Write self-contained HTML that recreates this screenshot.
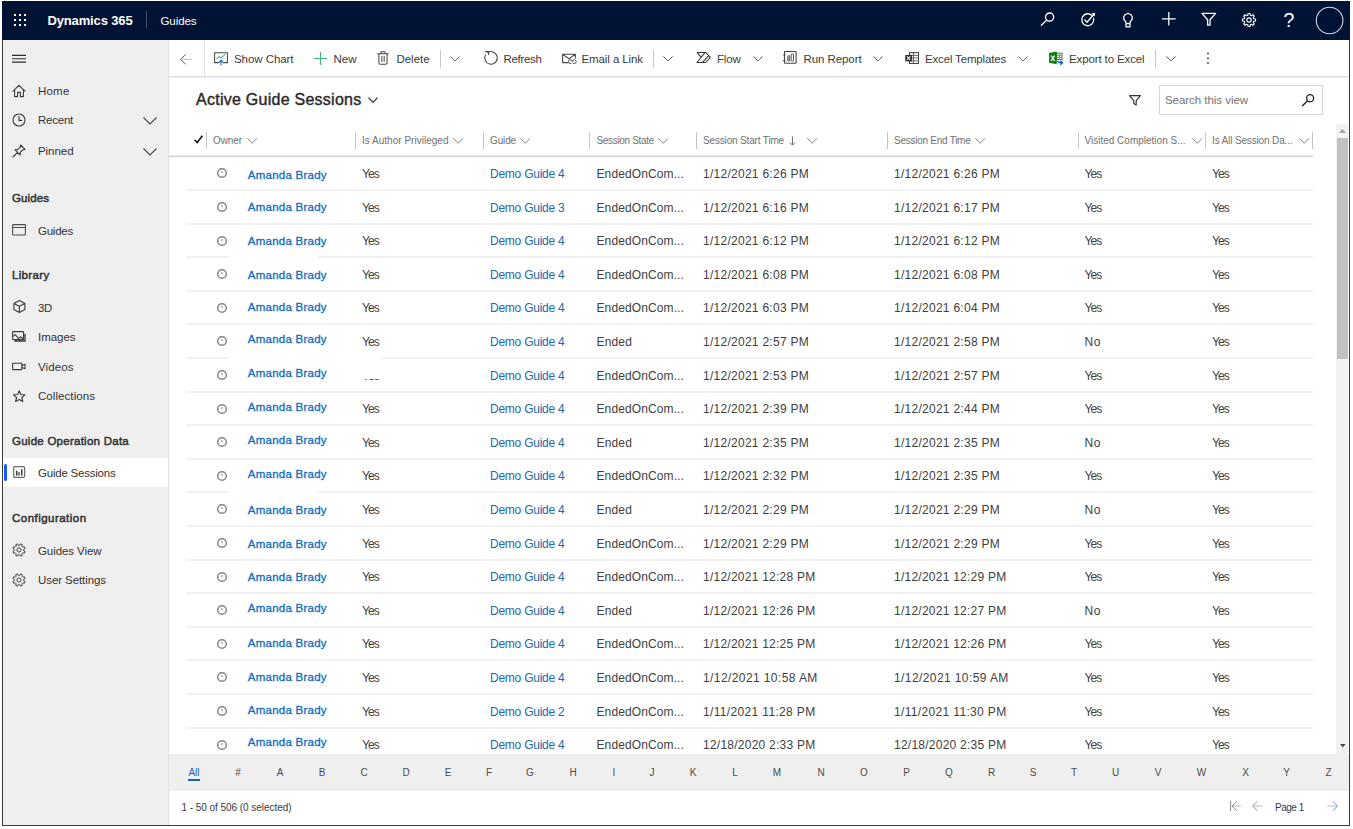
<!DOCTYPE html>
<html lang="en"><head><meta charset="utf-8"><title>Guides - Active Guide Sessions</title>
<style>
html,body{margin:0;padding:0;background:#fff;}
body{position:relative;width:1353px;height:829px;overflow:hidden;font-family:"Liberation Sans",sans-serif;}
.t{position:absolute;white-space:nowrap;line-height:20px;height:20px;}
.r{position:absolute;}
svg{overflow:visible}
</style></head><body>
<div class="chrome">
<div class="r" style="left:2px;top:1px;width:1346px;height:823px;background:transparent;border:1px solid #3b3b3b;"></div>
<div class="r" style="left:2px;top:1px;width:1348px;height:39px;background:#011335;"></div>
<div class="r" style="left:3px;top:40px;width:165px;height:785px;background:#efefef;"></div>
<div class="r" style="left:168px;top:40px;width:1px;height:785px;background:#e2e2e2;"></div>
<div class="r" style="left:3px;top:458px;width:165px;height:29px;background:#ffffff;"></div>
<div class="r" style="left:4px;top:464px;width:3px;height:17px;background:#0f5bff;border-radius:2px;"></div>
<div class="r" style="left:169px;top:76px;width:1180px;height:1px;background:#dedede;"></div>
<div class="r" style="left:169px;top:77px;width:1180px;height:1px;background:#f1f1f1;"></div>
<div class="r" style="left:204px;top:40px;width:1px;height:36px;background:#e4e4e4;"></div>
</div>
<header>
<svg class="r" style="left:14px;top:14px;" width="12" height="12" viewBox="0 0 12 12" fill="none"><rect x="0" y="0" width="2" height="2" fill="#fff"/><rect x="0" y="5" width="2" height="2" fill="#fff"/><rect x="0" y="10" width="2" height="2" fill="#fff"/><rect x="5" y="0" width="2" height="2" fill="#fff"/><rect x="5" y="5" width="2" height="2" fill="#fff"/><rect x="5" y="10" width="2" height="2" fill="#fff"/><rect x="10" y="0" width="2" height="2" fill="#fff"/><rect x="10" y="5" width="2" height="2" fill="#fff"/><rect x="10" y="10" width="2" height="2" fill="#fff"/></svg>
<span class="t" id="t1" style="left:47.5px;top:11px;font-size:13px;color:#fff;letter-spacing:-0.145px;font-weight:700;">Dynamics 365</span>
<div class="r" style="left:146px;top:11px;width:1px;height:17px;background:#46526c;"></div>
<span class="t" id="t2" style="left:160.5px;top:11.3px;font-size:11.5px;color:#fff;letter-spacing:-0.073px;">Guides</span>
<svg class="r" style="left:1040px;top:10.8px;" width="16" height="16" viewBox="0 0 16 16" fill="none"><circle cx="9.6" cy="6.1" r="4.1" stroke="#fff" stroke-width="1.3" fill="none" stroke-linecap="round" stroke-linejoin="round"/><path d="M6.6 9.1 L1.4 14.3" stroke="#fff" stroke-width="1.3" fill="none" stroke-linecap="round" stroke-linejoin="round"/></svg>
<svg class="r" style="left:1080px;top:12px;" width="16" height="16" viewBox="0 0 16 16" fill="none"><path d="M12.6 4.2 A6 6 0 1 0 13.6 6.4" stroke="#fff" stroke-width="1.3" fill="none" stroke-linecap="round" stroke-linejoin="round"/><path d="M4.8 8 L7 10.2 L13.6 2.6" stroke="#fff" stroke-width="1.3" fill="none" stroke-linecap="round" stroke-linejoin="round"/><path d="M11.6 1.2 L15.2 0.8 L14.8 4.4 Z" fill="#fff"/></svg>
<svg class="r" style="left:1120px;top:12.5px;" width="16" height="16" viewBox="0 0 16 16" fill="none"><path d="M6 10.6 v-0.9 q0 -0.8 -0.7 -1.5 a4.3 4.3 0 1 1 5.4 0 q-0.7 0.7 -0.7 1.5 v0.9 M6 10.6 h4 v3.2 h-4 z" stroke="#fff" stroke-width="1.3" fill="none" stroke-linecap="round" stroke-linejoin="round"/></svg>
<svg class="r" style="left:1162px;top:12px;" width="13.6" height="13.6" viewBox="0 0 13.6 13.6" fill="none"><path d="M6.8 0 V13.6 M0 6.8 H13.6" stroke="#fff" stroke-width="1.25" fill="none"/></svg>
<svg class="r" style="left:1201px;top:12px;" width="16" height="16" viewBox="0 0 16 16" fill="none"><path d="M1 1.4 H14.6 L9 7.8 V13.2 H6.6 V7.8 Z" stroke="#fff" stroke-width="1.3" fill="none" stroke-linecap="round" stroke-linejoin="round"/></svg>
<svg class="r" style="left:1241px;top:11.5px;" width="16" height="16" viewBox="0 0 16 16" fill="none"><circle cx="8" cy="8" r="2.2" stroke="#fff" stroke-width="1.2" fill="none"/><path d="M12.75 6.81 L14.52 6.97 L14.52 9.03 L12.75 9.19 L12.20 10.52 L13.34 11.88 L11.88 13.34 L10.52 12.20 L9.19 12.75 L9.03 14.52 L6.97 14.52 L6.81 12.75 L5.48 12.20 L4.12 13.34 L2.66 11.88 L3.80 10.52 L3.25 9.19 L1.48 9.03 L1.48 6.97 L3.25 6.81 L3.80 5.48 L2.66 4.12 L4.12 2.66 L5.48 3.80 L6.81 3.25 L6.97 1.48 L9.03 1.48 L9.19 3.25 L10.52 3.80 L11.88 2.66 L13.34 4.12 L12.20 5.48 Z" stroke="#fff" stroke-width="1.1" fill="none" stroke-linejoin="round"/></svg>
<span class="t" id="t3" style="left:1283.6px;top:10.3px;font-size:19.5px;color:#fff;">?</span>
<svg class="r" style="left:1315px;top:6px;" width="30" height="30" viewBox="0 0 30 30" fill="none"><circle cx="14.6" cy="14.5" r="13.3" stroke="#d3d7e0" stroke-width="1.1" fill="none"/></svg>
</header>
<nav aria-label="Site map">
<svg class="r" style="left:12px;top:54px;" width="14" height="10" viewBox="0 0 14 10" fill="none"><path d="M0 1.3 H14 M0 4.75 H14 M0 8.2 H14" stroke="#2e2e2e" stroke-width="1.2"/></svg>
<span class="t" id="t4" style="left:38px;top:81px;font-size:11.5px;color:#333;letter-spacing:0.203px;">Home</span>
<span class="t" id="t5" style="left:38px;top:109.9px;font-size:11.5px;color:#333;letter-spacing:-0.240px;">Recent</span>
<span class="t" id="t6" style="left:38px;top:140.9px;font-size:11.5px;color:#333;letter-spacing:-0.052px;">Pinned</span>
<span class="t" id="t7" style="left:12px;top:187.5px;font-size:11.5px;color:#333;letter-spacing:0.094px;-webkit-text-stroke:0.5px #333;">Guides</span>
<span class="t" id="t8" style="left:38px;top:220.5px;font-size:11.5px;color:#333;letter-spacing:-0.240px;">Guides</span>
<span class="t" id="t9" style="left:12px;top:264.5px;font-size:11.5px;color:#333;letter-spacing:0.335px;-webkit-text-stroke:0.5px #333;">Library</span>
<span class="t" id="t10" style="left:38px;top:297.5px;font-size:11.5px;color:#333;letter-spacing:-0.352px;">3D</span>
<span class="t" id="t11" style="left:38px;top:327px;font-size:11.5px;color:#333;letter-spacing:-0.036px;">Images</span>
<span class="t" id="t12" style="left:38px;top:356.5px;font-size:11.5px;color:#333;letter-spacing:0.089px;">Videos</span>
<span class="t" id="t13" style="left:38px;top:386px;font-size:11.5px;color:#333;letter-spacing:0.068px;">Collections</span>
<span class="t" id="t14" style="left:12px;top:430.5px;font-size:11.5px;color:#333;letter-spacing:0.256px;-webkit-text-stroke:0.5px #333;">Guide Operation Data</span>
<span class="t" id="t15" style="left:38px;top:463px;font-size:11.5px;color:#333;letter-spacing:-0.218px;">Guide Sessions</span>
<span class="t" id="t16" style="left:12px;top:507.5px;font-size:11.5px;color:#333;letter-spacing:0.469px;-webkit-text-stroke:0.5px #333;">Configuration</span>
<span class="t" id="t17" style="left:38px;top:540.5px;font-size:11.5px;color:#333;letter-spacing:-0.078px;">Guides View</span>
<span class="t" id="t18" style="left:38px;top:570px;font-size:11.5px;color:#333;letter-spacing:-0.079px;">User Settings</span>
<svg class="r" style="left:12px;top:84px;" width="14" height="14" viewBox="0 0 14 14" fill="none"><path d="M1 7.2 L7 1.4 L13 7.2 M2.6 6 V12.6 H5.6 V8.4 H8.4 V12.6 H11.4 V6" stroke="#3a3a3a" stroke-width="1.1" fill="none" stroke-linecap="round" stroke-linejoin="round"/></svg>
<svg class="r" style="left:12px;top:113px;" width="14" height="14" viewBox="0 0 14 14" fill="none"><circle cx="7" cy="7" r="6" stroke="#3a3a3a" stroke-width="1.1" fill="none" stroke-linecap="round" stroke-linejoin="round"/><path d="M7 3.4 V7.4 H9.8" stroke="#3a3a3a" stroke-width="1.1" fill="none" stroke-linecap="round" stroke-linejoin="round"/></svg>
<svg class="r" style="left:12px;top:144px;" width="14" height="14" viewBox="0 0 14 14" fill="none"><path d="M8.6 1 L13 5.4 L10.6 6 L8.4 8.2 L8.2 11 L3 5.8 L5.8 5.6 L8 3.4 Z M5.6 8.4 L1 13" stroke="#3a3a3a" stroke-width="1.1" fill="none" stroke-linecap="round" stroke-linejoin="round"/></svg>
<svg class="r" style="left:143px;top:117px;" width="14" height="8" viewBox="0 0 14 8" fill="none"><path d="M0.5 0.5 L7 7 L13.5 0.5" stroke="#444" stroke-width="1.1" fill="none"/></svg>
<svg class="r" style="left:143px;top:148px;" width="14" height="8" viewBox="0 0 14 8" fill="none"><path d="M0.5 0.5 L7 7 L13.5 0.5" stroke="#444" stroke-width="1.1" fill="none"/></svg>
<svg class="r" style="left:12px;top:224px;" width="14" height="12" viewBox="0 0 14 12" fill="none"><rect x="0.6" y="0.6" width="12.8" height="10.4" rx="0.8" stroke="#4a4a4a" stroke-width="1.1" fill="none"/><path d="M0.6 3.5 H13.4" stroke="#4a4a4a" stroke-width="1"/></svg>
<svg class="r" style="left:12.6px;top:300.4px;" width="13" height="13" viewBox="0 0 13 13" fill="none"><path d="M6.4 0.6 L11.9 3.4 V9.6 L6.4 12.4 L0.9 9.6 V3.4 Z M0.9 3.4 L6.4 6.2 L11.9 3.4 M6.4 6.2 V12.4" stroke="#3a3a3a" stroke-width="1.1" fill="none" stroke-linecap="round" stroke-linejoin="round"/></svg>
<svg class="r" style="left:12px;top:331px;" width="14" height="12" viewBox="0 0 14 12" fill="none"><rect x="0.6" y="0.6" width="11" height="8" rx="0.8" stroke="#3a3a3a" stroke-width="1.1" fill="none" stroke-linecap="round" stroke-linejoin="round"/><path d="M2.4 10 H13 V2.8" stroke="#3a3a3a" stroke-width="1.3" fill="none"/><path d="M0.8 5.4 L3.2 3.6 L6.6 7.6 L8.8 5.8 L11.4 8" stroke="#3a3a3a" stroke-width="1.1" fill="none" stroke-linecap="round" stroke-linejoin="round"/></svg>
<svg class="r" style="left:12px;top:361.5px;" width="14" height="10" viewBox="0 0 14 10" fill="none"><rect x="0.6" y="1.2" width="9.4" height="6.4" rx="0.6" stroke="#3a3a3a" stroke-width="1.1" fill="none" stroke-linecap="round" stroke-linejoin="round"/><path d="M10 3.6 L13 2.2 V6.8 L10 5.4" stroke="#3a3a3a" stroke-width="1.1" fill="none" stroke-linecap="round" stroke-linejoin="round"/></svg>
<svg class="r" style="left:12.8px;top:389.8px;" width="13" height="12" viewBox="0 0 13 12" fill="none"><path d="M6.2 0.7 L7.8 4.5 L12 4.8 L8.8 7.5 L9.8 11.5 L6.2 9.4 L2.6 11.5 L3.6 7.5 L0.4 4.8 L4.6 4.5 Z" stroke="#3a3a3a" stroke-width="1.1" fill="none" stroke-linecap="round" stroke-linejoin="round"/></svg>
<svg class="r" style="left:13px;top:466px;" width="12" height="12" viewBox="0 0 12 12" fill="none"><rect x="0.7" y="0.6" width="10.9" height="10.7" rx="1" stroke="#6e6e6e" stroke-width="1.25" fill="none"/><path d="M3.65 9.6 V4.7 M8.75 9.6 V3.2" stroke="#3a3a3a" stroke-width="1.5"/><path d="M5.9 9.6 V6.1" stroke="#7a7a7a" stroke-width="2"/></svg>
<svg class="r" style="left:12px;top:543px;" width="14" height="14" viewBox="0 0 14 14" fill="none"><circle cx="7" cy="7" r="2.1" stroke="#444" stroke-width="1" fill="none"/><path d="M11.65 7.69 L13.13 8.47 L12.37 10.29 L10.78 9.80 L9.80 10.78 L10.29 12.37 L8.47 13.13 L7.69 11.65 L6.31 11.65 L5.53 13.13 L3.71 12.37 L4.20 10.78 L3.22 9.80 L1.63 10.29 L0.87 8.47 L2.35 7.69 L2.35 6.31 L0.87 5.53 L1.63 3.71 L3.22 4.20 L4.20 3.22 L3.71 1.63 L5.53 0.87 L6.31 2.35 L7.69 2.35 L8.47 0.87 L10.29 1.63 L9.80 3.22 L10.78 4.20 L12.37 3.71 L13.13 5.53 L11.65 6.31 Z" stroke="#444" stroke-width="1" fill="none" stroke-linejoin="round"/></svg>
<svg class="r" style="left:12px;top:573px;" width="14" height="14" viewBox="0 0 14 14" fill="none"><circle cx="7" cy="7" r="2.1" stroke="#444" stroke-width="1" fill="none"/><path d="M11.65 7.69 L13.13 8.47 L12.37 10.29 L10.78 9.80 L9.80 10.78 L10.29 12.37 L8.47 13.13 L7.69 11.65 L6.31 11.65 L5.53 13.13 L3.71 12.37 L4.20 10.78 L3.22 9.80 L1.63 10.29 L0.87 8.47 L2.35 7.69 L2.35 6.31 L0.87 5.53 L1.63 3.71 L3.22 4.20 L4.20 3.22 L3.71 1.63 L5.53 0.87 L6.31 2.35 L7.69 2.35 L8.47 0.87 L10.29 1.63 L9.80 3.22 L10.78 4.20 L12.37 3.71 L13.13 5.53 L11.65 6.31 Z" stroke="#444" stroke-width="1" fill="none" stroke-linejoin="round"/></svg>
</nav>
<div role="toolbar" aria-label="Commands">
<svg class="r" style="left:180.3px;top:53.5px;" width="12" height="11" viewBox="0 0 12 11" fill="none"><path d="M12 5.4 H2" stroke="#c2c2c2" stroke-width="1.1" fill="none"/><path d="M5.6 0.5 L0.7 5.4 L5.6 10.3" stroke="#5a5a5a" stroke-width="1" fill="none"/></svg>
<svg class="r" style="left:214px;top:51px;" width="14" height="15" viewBox="0 0 14 15" fill="none"><path d="M5 11.6 H0.6 V1.7 H13.4 V11.6 H9" stroke="#4a4a4a" stroke-width="1.05" fill="none"/><path d="M2.4 8.2 L5.2 5.4 L7 7 L11.2 3.4" stroke="#4fb48a" stroke-width="1.1" fill="none"/><path d="M7 14.6 V9.6 M4.9 11.4 L7 9.2 L9.1 11.4" stroke="#2a6fd0" stroke-width="1.25" fill="none"/></svg>
<span class="t" id="t19" style="left:234px;top:48.5px;font-size:11.5px;color:#3b3b3b;letter-spacing:-0.059px;">Show Chart</span>
<svg class="r" style="left:314px;top:52px;" width="13" height="13" viewBox="0 0 13 13" fill="none"><path d="M6.5 0 V13 M0 6.5 H13" stroke="#44b87a" stroke-width="1.2"/></svg>
<span class="t" id="t20" style="left:333.5px;top:48.5px;font-size:11.5px;color:#3b3b3b;letter-spacing:-0.005px;">New</span>
<svg class="r" style="left:377px;top:51px;" width="12" height="14" viewBox="0 0 12 14" fill="none"><path d="M0.6 2.7 H11.4 M4 2.5 V0.8 H8 V2.5 M1.9 2.9 V12 Q1.9 13.3 3.2 13.3 H8.8 Q10.1 13.3 10.1 12 V2.9" stroke="#4a4a4a" stroke-width="1.05" fill="none" stroke-linecap="round" stroke-linejoin="round"/><path d="M4.5 5 V11 M6 5 V11 M7.5 5 V11" stroke="#6a6a6a" stroke-width="0.8"/></svg>
<span class="t" id="t21" style="left:396.5px;top:48.5px;font-size:11.5px;color:#3b3b3b;letter-spacing:-0.042px;">Delete</span>
<div class="r" style="left:440px;top:50px;width:1px;height:18px;background:#c8c8c8;"></div>
<svg class="r" style="left:450px;top:56px;" width="10" height="6" viewBox="0 0 10 6" fill="none"><path d="M0.4 0.4 L5 5 L9.6 0.4" stroke="#686868" stroke-width="1" fill="none"/></svg>
<svg class="r" style="left:484px;top:51px;" width="14" height="15" viewBox="0 0 14 15" fill="none"><path d="M3.85 1.44 A6.3 6.3 0 1 1 1.44 3.94 M1.6 0.6 H4.6 V3.6" stroke="#444" stroke-width="1.05" fill="none" stroke-linecap="round" stroke-linejoin="round"/></svg>
<span class="t" id="t22" style="left:503.5px;top:48.5px;font-size:11.5px;color:#3b3b3b;letter-spacing:-0.326px;">Refresh</span>
<svg class="r" style="left:561.5px;top:52px;" width="15" height="14" viewBox="0 0 15 14" fill="none"><path d="M13.4 6.4 V2.2 H0.6 V10.6 H6.2 M0.8 2.4 L7 6.8 L13.2 2.4" stroke="#4a4a4a" stroke-width="1.05" fill="none" stroke-linejoin="round"/><path d="M10.2 9.6 a1.9 1.9 0 1 0 -1.9 1.9 h1.2 M10.4 9.6 a1.9 1.9 0 1 1 1.9 1.9 h-1.2" stroke="#4a4a4a" stroke-width="0.95" fill="none"/></svg>
<span class="t" id="t23" style="left:581.5px;top:48.5px;font-size:11.5px;color:#3b3b3b;letter-spacing:-0.095px;">Email a Link</span>
<div class="r" style="left:652.5px;top:50px;width:1px;height:18px;background:#c8c8c8;"></div>
<svg class="r" style="left:663px;top:56px;" width="10" height="6" viewBox="0 0 10 6" fill="none"><path d="M0.4 0.4 L5 5 L9.6 0.4" stroke="#686868" stroke-width="1" fill="none"/></svg>
<svg class="r" style="left:696px;top:52px;" width="15" height="11" viewBox="0 0 15 11" fill="none"><path d="M0.9 0.4 H9.7 L14.3 5.4 L9.7 10.5 H0.9 L9.1 0.4 M0.9 0.4 L5.4 5.4 M6.6 10.4 L12.6 3.6" stroke="#333" stroke-width="1.05" fill="none" stroke-linejoin="round"/></svg>
<span class="t" id="t24" style="left:717px;top:48.5px;font-size:11.5px;color:#3b3b3b;letter-spacing:-0.195px;">Flow</span>
<svg class="r" style="left:752.5px;top:56px;" width="10" height="6" viewBox="0 0 10 6" fill="none"><path d="M0.4 0.4 L5 5 L9.6 0.4" stroke="#686868" stroke-width="1" fill="none"/></svg>
<svg class="r" style="left:784.4px;top:51.3px;" width="13" height="13" viewBox="0 0 13 13" fill="none"><rect x="0.5" y="0.5" width="11.6" height="11.8" rx="0.8" stroke="#444" stroke-width="1.1" fill="none"/><path d="M-0.8 4 H1.4 M-0.8 9.6 H1.4" stroke="#444" stroke-width="1.2"/><rect x="3.7" y="4.6" width="2" height="5.6" rx="0.8" stroke="#555" stroke-width="0.9" fill="#b0b0b0"/><rect x="7.2" y="2.9" width="2.3" height="7.3" rx="0.8" stroke="#444" stroke-width="0.9" fill="none"/></svg>
<span class="t" id="t25" style="left:803.5px;top:48.5px;font-size:11.5px;color:#3b3b3b;letter-spacing:-0.081px;">Run Report</span>
<svg class="r" style="left:873px;top:56px;" width="10" height="6" viewBox="0 0 10 6" fill="none"><path d="M0.4 0.4 L5 5 L9.6 0.4" stroke="#686868" stroke-width="1" fill="none"/></svg>
<svg class="r" style="left:905px;top:52px;" width="14" height="13" viewBox="0 0 14 13" fill="none"><rect x="4.5" y="0.6" width="9" height="10.9" stroke="#444" stroke-width="1.05" fill="#fff"/><path d="M4.5 3.4 H13.5 M4.5 6 H13.5 M4.5 8.8 H13.5 M8.4 0.6 V11.5" stroke="#555" stroke-width="0.9"/><rect x="0.3" y="3" width="6.6" height="6.4" fill="#2b2b2b"/><path d="M2 4.4 L5.2 8 M5.2 4.4 L2 8" stroke="#fff" stroke-width="1.1"/></svg>
<span class="t" id="t26" style="left:925px;top:48.5px;font-size:11.5px;color:#3b3b3b;letter-spacing:-0.169px;">Excel Templates</span>
<svg class="r" style="left:1017.5px;top:56px;" width="10" height="6" viewBox="0 0 10 6" fill="none"><path d="M0.4 0.4 L5 5 L9.6 0.4" stroke="#686868" stroke-width="1" fill="none"/></svg>
<svg class="r" style="left:1049px;top:51px;" width="15" height="14" viewBox="0 0 15 14" fill="none"><rect x="7.4" y="2.2" width="5.6" height="6.4" stroke="#2e8b2e" stroke-width="1" fill="#fff"/><path d="M7.4 4.4 H13 M7.4 6.5 H13 M10.3 2.2 V8.6" stroke="#55a555" stroke-width="0.9"/><path d="M0.1 2.1 L7.75 0.5 V13.3 L0.1 11.8 Z" fill="#107c10"/><path d="M2.1 4.7 L5.6 10 M5.6 4.7 L2.1 10" stroke="#fff" stroke-width="1.3"/><path d="M8.6 9.8 Q9 11.8 12.6 11.8 M11.2 9.8 L13.6 11.8 L11.2 13.8" stroke="#1a5fc4" stroke-width="1.3" fill="none"/></svg>
<span class="t" id="t27" style="left:1069px;top:48.5px;font-size:11.5px;color:#3b3b3b;letter-spacing:-0.123px;">Export to Excel</span>
<div class="r" style="left:1155px;top:50px;width:1px;height:18px;background:#c8c8c8;"></div>
<svg class="r" style="left:1165.5px;top:56px;" width="10" height="6" viewBox="0 0 10 6" fill="none"><path d="M0.4 0.4 L5 5 L9.6 0.4" stroke="#686868" stroke-width="1" fill="none"/></svg>
<svg class="r" style="left:1206px;top:51px;" width="4" height="14" viewBox="0 0 4 14" fill="none"><circle cx="2" cy="2.4" r="0.95" fill="#4a4a4a"/><circle cx="2" cy="7.2" r="0.95" fill="#4a4a4a"/><circle cx="2" cy="12" r="0.95" fill="#4a4a4a"/></svg>
</div>
<main>
<span class="t" id="t28" style="left:196px;top:90.4px;font-size:16px;color:#2a2a2a;letter-spacing:0.258px;-webkit-text-stroke:0.42px #2a2a2a;">Active Guide Sessions</span>
<svg class="r" style="left:368px;top:97.4px;" width="10" height="7" viewBox="0 0 10 7" fill="none"><path d="M0.5 0.6 L5 5.4 L9.5 0.6" stroke="#333" stroke-width="1.3" fill="none"/></svg>
<svg class="r" style="left:1129px;top:95px;" width="12" height="11" viewBox="0 0 12 11" fill="none"><path d="M0.6 0.6 H11.4 L7.2 5.6 V10 L4.8 8.6 V5.6 Z" stroke="#333" stroke-width="1.15" fill="none" stroke-linejoin="round"/></svg>
<div class="r" style="left:1159px;top:85px;width:162px;height:27.6px;background:#fff;border:1px solid #d6d6d6;"></div>
<span class="t" id="t29" style="left:1165px;top:89.6px;font-size:11.5px;color:#747474;letter-spacing:-0.046px;">Search this view</span>
<svg class="r" style="left:1301px;top:94px;" width="13" height="13" viewBox="0 0 13 13" fill="none"><circle cx="9.1" cy="4.2" r="3.5" stroke="#222" stroke-width="1.3" fill="none"/><path d="M6.6 6.7 L1.2 12" stroke="#222" stroke-width="1.4"/></svg>
<svg class="r" style="left:193.5px;top:135px;" width="9" height="9" viewBox="0 0 9 9" fill="none"><path d="M0.6 4.8 L3.2 7.6 L8.4 0.8" stroke="#111" stroke-width="1.6" fill="none"/></svg>
<div class="r" style="left:206px;top:132px;width:1px;height:17px;background:#c4c4c4;"></div>
<div class="r" style="left:355px;top:132px;width:1px;height:17px;background:#c4c4c4;"></div>
<div class="r" style="left:483px;top:132px;width:1px;height:17px;background:#c4c4c4;"></div>
<div class="r" style="left:589px;top:132px;width:1px;height:17px;background:#c4c4c4;"></div>
<div class="r" style="left:696px;top:132px;width:1px;height:17px;background:#c4c4c4;"></div>
<div class="r" style="left:887px;top:132px;width:1px;height:17px;background:#c4c4c4;"></div>
<div class="r" style="left:1078px;top:132px;width:1px;height:17px;background:#c4c4c4;"></div>
<div class="r" style="left:1205px;top:132px;width:1px;height:17px;background:#c4c4c4;"></div>
<div class="r" style="left:1312px;top:132px;width:1px;height:17px;background:#c4c4c4;"></div>
<span class="t" id="t30" style="left:213px;top:131px;font-size:10px;color:#707070;letter-spacing:-0.091px;">Owner</span>
<svg class="r" style="left:246.5px;top:137.8px;" width="10.4" height="6" viewBox="0 0 10.4 6" fill="none"><path d="M0.3 0.3 L5.2 5.3 L10.1 0.3" stroke="#777" stroke-width="0.9" fill="none"/></svg>
<span class="t" id="t31" style="left:362px;top:131px;font-size:10px;color:#707070;letter-spacing:0.016px;">Is Author Privileged</span>
<svg class="r" style="left:452.5px;top:137.8px;" width="10.4" height="6" viewBox="0 0 10.4 6" fill="none"><path d="M0.3 0.3 L5.2 5.3 L10.1 0.3" stroke="#777" stroke-width="0.9" fill="none"/></svg>
<span class="t" id="t32" style="left:490px;top:131px;font-size:10px;color:#707070;letter-spacing:-0.138px;">Guide</span>
<svg class="r" style="left:520px;top:137.8px;" width="10.4" height="6" viewBox="0 0 10.4 6" fill="none"><path d="M0.3 0.3 L5.2 5.3 L10.1 0.3" stroke="#777" stroke-width="0.9" fill="none"/></svg>
<span class="t" id="t33" style="left:596.5px;top:131px;font-size:10px;color:#707070;letter-spacing:-0.325px;">Session State</span>
<svg class="r" style="left:658px;top:137.8px;" width="10.4" height="6" viewBox="0 0 10.4 6" fill="none"><path d="M0.3 0.3 L5.2 5.3 L10.1 0.3" stroke="#777" stroke-width="0.9" fill="none"/></svg>
<span class="t" id="t34" style="left:703px;top:131px;font-size:10px;color:#707070;letter-spacing:-0.162px;">Session Start Time</span>
<svg class="r" style="left:806.5px;top:137.8px;" width="10.4" height="6" viewBox="0 0 10.4 6" fill="none"><path d="M0.3 0.3 L5.2 5.3 L10.1 0.3" stroke="#777" stroke-width="0.9" fill="none"/></svg>
<svg class="r" style="left:789px;top:136px;" width="7" height="10" viewBox="0 0 7 10" fill="none"><path d="M3.5 0.4 V9 M0.8 6.4 L3.5 9.2 L6.2 6.4" stroke="#666" stroke-width="0.9" fill="none"/></svg>
<span class="t" id="t35" style="left:894px;top:131px;font-size:10px;color:#707070;letter-spacing:-0.257px;">Session End Time</span>
<svg class="r" style="left:974.5px;top:137.8px;" width="10.4" height="6" viewBox="0 0 10.4 6" fill="none"><path d="M0.3 0.3 L5.2 5.3 L10.1 0.3" stroke="#777" stroke-width="0.9" fill="none"/></svg>
<span class="t" id="t36" style="left:1084.5px;top:131px;font-size:10px;color:#707070;letter-spacing:0.001px;">Visited Completion S...</span>
<svg class="r" style="left:1192px;top:137.8px;" width="10.4" height="6" viewBox="0 0 10.4 6" fill="none"><path d="M0.3 0.3 L5.2 5.3 L10.1 0.3" stroke="#777" stroke-width="0.9" fill="none"/></svg>
<span class="t" id="t37" style="left:1212px;top:131px;font-size:10px;color:#707070;letter-spacing:-0.144px;">Is All Session Da...</span>
<svg class="r" style="left:1298.5px;top:137.8px;" width="10.4" height="6" viewBox="0 0 10.4 6" fill="none"><path d="M0.3 0.3 L5.2 5.3 L10.1 0.3" stroke="#777" stroke-width="0.9" fill="none"/></svg>
<svg class="r" style="left:169px;top:155px;" width="1144" height="3" viewBox="0 0 1144 3" fill="none"><rect x="0" y="0.6" width="1144" height="1.3" fill="#cecece"/><rect x="0" y="1.9" width="1144" height="0.6" fill="#ececec"/></svg>
<svg class="r" style="left:217px;top:168.3px;" width="10" height="10" viewBox="0 0 10 10" fill="none"><circle cx="5" cy="5" r="4.3" stroke="#858585" stroke-width="1.5" fill="none"/><path d="M5 3.6 V5.4 M4.2 3.8 H5.8" stroke="#909090" stroke-width="0.8"/></svg>
<span class="t" id="t38" style="left:247.8px;top:165px;font-size:11.5px;color:#0f6cbd;letter-spacing:0.243px;-webkit-text-stroke:0.3px #0f6cbd;">Amanda Brady</span>
<span class="t" id="t39" style="left:362px;top:164px;font-size:12px;color:#404040;letter-spacing:-0.859px;">Yes</span>
<span class="t" id="t40" style="left:490px;top:164px;font-size:12px;color:#2368ab;letter-spacing:-0.240px;">Demo Guide 4</span>
<span class="t" id="t41" style="left:596.5px;top:164px;font-size:12px;color:#404040;letter-spacing:0.112px;">EndedOnCom...</span>
<span class="t" id="t42" style="left:703px;top:164px;font-size:12px;color:#404040;letter-spacing:0.269px;">1/12/2021 6:26 PM</span>
<span class="t" id="t43" style="left:894px;top:164px;font-size:12px;color:#404040;letter-spacing:0.269px;">1/12/2021 6:26 PM</span>
<span class="t" id="t44" style="left:1084.5px;top:164px;font-size:12px;color:#404040;letter-spacing:-0.859px;">Yes</span>
<span class="t" id="t45" style="left:1212px;top:164px;font-size:12px;color:#404040;letter-spacing:-0.859px;">Yes</span>
<svg class="r" style="left:186px;top:189px;" width="1127" height="2" viewBox="0 0 1127 2" fill="none"><rect x="0" y="0.1" width="1127" height="1.8" fill="#f0f0f0"/></svg>
<svg class="r" style="left:217px;top:201.9px;" width="10" height="10" viewBox="0 0 10 10" fill="none"><circle cx="5" cy="5" r="4.3" stroke="#858585" stroke-width="1.5" fill="none"/><path d="M5 3.6 V5.4 M4.2 3.8 H5.8" stroke="#909090" stroke-width="0.8"/></svg>
<span class="t" id="t46" style="left:247.8px;top:196.9px;font-size:11.5px;color:#0f6cbd;letter-spacing:0.243px;-webkit-text-stroke:0.3px #0f6cbd;">Amanda Brady</span>
<span class="t" id="t47" style="left:362px;top:197.6px;font-size:12px;color:#404040;letter-spacing:-0.859px;">Yes</span>
<span class="t" id="t48" style="left:490px;top:197.6px;font-size:12px;color:#2368ab;letter-spacing:-0.240px;">Demo Guide 3</span>
<span class="t" id="t49" style="left:596.5px;top:197.6px;font-size:12px;color:#404040;letter-spacing:0.112px;">EndedOnCom...</span>
<span class="t" id="t50" style="left:703px;top:197.6px;font-size:12px;color:#404040;letter-spacing:0.269px;">1/12/2021 6:16 PM</span>
<span class="t" id="t51" style="left:894px;top:197.6px;font-size:12px;color:#404040;letter-spacing:0.269px;">1/12/2021 6:17 PM</span>
<span class="t" id="t52" style="left:1084.5px;top:197.6px;font-size:12px;color:#404040;letter-spacing:-0.859px;">Yes</span>
<span class="t" id="t53" style="left:1212px;top:197.6px;font-size:12px;color:#404040;letter-spacing:-0.859px;">Yes</span>
<svg class="r" style="left:186px;top:222.6px;" width="1127" height="2" viewBox="0 0 1127 2" fill="none"><rect x="0" y="0.1" width="1127" height="1.8" fill="#f0f0f0"/></svg>
<svg class="r" style="left:217px;top:235.5px;" width="10" height="10" viewBox="0 0 10 10" fill="none"><circle cx="5" cy="5" r="4.3" stroke="#858585" stroke-width="1.5" fill="none"/><path d="M5 3.6 V5.4 M4.2 3.8 H5.8" stroke="#909090" stroke-width="0.8"/></svg>
<span class="t" id="t54" style="left:247.8px;top:231.2px;font-size:11.5px;color:#0f6cbd;letter-spacing:0.243px;-webkit-text-stroke:0.3px #0f6cbd;">Amanda Brady</span>
<span class="t" id="t55" style="left:362px;top:231.2px;font-size:12px;color:#404040;letter-spacing:-0.859px;">Yes</span>
<span class="t" id="t56" style="left:490px;top:231.2px;font-size:12px;color:#2368ab;letter-spacing:-0.240px;">Demo Guide 4</span>
<span class="t" id="t57" style="left:596.5px;top:231.2px;font-size:12px;color:#404040;letter-spacing:0.112px;">EndedOnCom...</span>
<span class="t" id="t58" style="left:703px;top:231.2px;font-size:12px;color:#404040;letter-spacing:0.269px;">1/12/2021 6:12 PM</span>
<span class="t" id="t59" style="left:894px;top:231.2px;font-size:12px;color:#404040;letter-spacing:0.269px;">1/12/2021 6:12 PM</span>
<span class="t" id="t60" style="left:1084.5px;top:231.2px;font-size:12px;color:#404040;letter-spacing:-0.859px;">Yes</span>
<span class="t" id="t61" style="left:1212px;top:231.2px;font-size:12px;color:#404040;letter-spacing:-0.859px;">Yes</span>
<svg class="r" style="left:186px;top:256.2px;" width="1127" height="2" viewBox="0 0 1127 2" fill="none"><rect x="0" y="0.1" width="1127" height="1.8" fill="#f0f0f0"/></svg>
<div class="r" style="left:229px;top:255.2px;width:89px;height:4px;background:#fff;"></div>
<svg class="r" style="left:217px;top:269.1px;" width="10" height="10" viewBox="0 0 10 10" fill="none"><circle cx="5" cy="5" r="4.3" stroke="#858585" stroke-width="1.5" fill="none"/><path d="M5 3.6 V5.4 M4.2 3.8 H5.8" stroke="#909090" stroke-width="0.8"/></svg>
<span class="t" id="t62" style="left:247.8px;top:264.8px;font-size:11.5px;color:#0f6cbd;letter-spacing:0.243px;-webkit-text-stroke:0.3px #0f6cbd;">Amanda Brady</span>
<span class="t" id="t63" style="left:362px;top:264.8px;font-size:12px;color:#404040;letter-spacing:-0.859px;">Yes</span>
<span class="t" id="t64" style="left:490px;top:264.8px;font-size:12px;color:#2368ab;letter-spacing:-0.240px;">Demo Guide 4</span>
<span class="t" id="t65" style="left:596.5px;top:264.8px;font-size:12px;color:#404040;letter-spacing:0.112px;">EndedOnCom...</span>
<span class="t" id="t66" style="left:703px;top:264.8px;font-size:12px;color:#404040;letter-spacing:0.269px;">1/12/2021 6:08 PM</span>
<span class="t" id="t67" style="left:894px;top:264.8px;font-size:12px;color:#404040;letter-spacing:0.269px;">1/12/2021 6:08 PM</span>
<span class="t" id="t68" style="left:1084.5px;top:264.8px;font-size:12px;color:#404040;letter-spacing:-0.859px;">Yes</span>
<span class="t" id="t69" style="left:1212px;top:264.8px;font-size:12px;color:#404040;letter-spacing:-0.859px;">Yes</span>
<svg class="r" style="left:186px;top:289.8px;" width="1127" height="2" viewBox="0 0 1127 2" fill="none"><rect x="0" y="0.1" width="1127" height="1.8" fill="#f0f0f0"/></svg>
<svg class="r" style="left:217px;top:302.7px;" width="10" height="10" viewBox="0 0 10 10" fill="none"><circle cx="5" cy="5" r="4.3" stroke="#858585" stroke-width="1.5" fill="none"/><path d="M5 3.6 V5.4 M4.2 3.8 H5.8" stroke="#909090" stroke-width="0.8"/></svg>
<span class="t" id="t70" style="left:247.8px;top:296.9px;font-size:11.5px;color:#0f6cbd;letter-spacing:0.243px;-webkit-text-stroke:0.3px #0f6cbd;">Amanda Brady</span>
<span class="t" id="t71" style="left:362px;top:298.4px;font-size:12px;color:#404040;letter-spacing:-0.859px;">Yes</span>
<span class="t" id="t72" style="left:490px;top:298.4px;font-size:12px;color:#2368ab;letter-spacing:-0.240px;">Demo Guide 4</span>
<span class="t" id="t73" style="left:596.5px;top:298.4px;font-size:12px;color:#404040;letter-spacing:0.112px;">EndedOnCom...</span>
<span class="t" id="t74" style="left:703px;top:298.4px;font-size:12px;color:#404040;letter-spacing:0.269px;">1/12/2021 6:03 PM</span>
<span class="t" id="t75" style="left:894px;top:298.4px;font-size:12px;color:#404040;letter-spacing:0.269px;">1/12/2021 6:04 PM</span>
<span class="t" id="t76" style="left:1084.5px;top:298.4px;font-size:12px;color:#404040;letter-spacing:-0.859px;">Yes</span>
<span class="t" id="t77" style="left:1212px;top:298.4px;font-size:12px;color:#404040;letter-spacing:-0.859px;">Yes</span>
<svg class="r" style="left:186px;top:323.4px;" width="1127" height="2" viewBox="0 0 1127 2" fill="none"><rect x="0" y="0.1" width="1127" height="1.8" fill="#f0f0f0"/></svg>
<svg class="r" style="left:217px;top:336.3px;" width="10" height="10" viewBox="0 0 10 10" fill="none"><circle cx="5" cy="5" r="4.3" stroke="#858585" stroke-width="1.5" fill="none"/><path d="M5 3.6 V5.4 M4.2 3.8 H5.8" stroke="#909090" stroke-width="0.8"/></svg>
<span class="t" id="t78" style="left:247.8px;top:328.8px;font-size:11.5px;color:#0f6cbd;letter-spacing:0.243px;-webkit-text-stroke:0.3px #0f6cbd;">Amanda Brady</span>
<span class="t" id="t79" style="left:362px;top:332px;font-size:12px;color:#404040;letter-spacing:-0.859px;">Yes</span>
<span class="t" id="t80" style="left:490px;top:332px;font-size:12px;color:#2368ab;letter-spacing:-0.240px;">Demo Guide 4</span>
<span class="t" id="t81" style="left:596.5px;top:332px;font-size:12px;color:#404040;letter-spacing:0.159px;">Ended</span>
<span class="t" id="t82" style="left:703px;top:332px;font-size:12px;color:#404040;letter-spacing:0.269px;">1/12/2021 2:57 PM</span>
<span class="t" id="t83" style="left:894px;top:332px;font-size:12px;color:#404040;letter-spacing:0.269px;">1/12/2021 2:58 PM</span>
<span class="t" id="t84" style="left:1084.5px;top:332px;font-size:12px;color:#404040;letter-spacing:0.578px;">No</span>
<span class="t" id="t85" style="left:1212px;top:332px;font-size:12px;color:#404040;letter-spacing:-0.859px;">Yes</span>
<svg class="r" style="left:186px;top:357px;" width="1127" height="2" viewBox="0 0 1127 2" fill="none"><rect x="0" y="0.1" width="1127" height="1.8" fill="#f0f0f0"/></svg>
<div class="r" style="left:229px;top:356px;width:153px;height:4px;background:#fff;"></div>
<svg class="r" style="left:217px;top:369.9px;" width="10" height="10" viewBox="0 0 10 10" fill="none"><circle cx="5" cy="5" r="4.3" stroke="#858585" stroke-width="1.5" fill="none"/><path d="M5 3.6 V5.4 M4.2 3.8 H5.8" stroke="#909090" stroke-width="0.8"/></svg>
<span class="t" id="t86" style="left:247.8px;top:362.85px;font-size:11.5px;color:#0f6cbd;letter-spacing:0.243px;-webkit-text-stroke:0.3px #0f6cbd;">Amanda Brady</span>
<span class="t" id="t87" style="left:362px;top:365.6px;font-size:12px;color:#404040;letter-spacing:-0.859px;">Yes</span>
<span class="t" id="t88" style="left:490px;top:365.6px;font-size:12px;color:#2368ab;letter-spacing:-0.240px;">Demo Guide 4</span>
<span class="t" id="t89" style="left:596.5px;top:365.6px;font-size:12px;color:#404040;letter-spacing:0.112px;">EndedOnCom...</span>
<span class="t" id="t90" style="left:703px;top:365.6px;font-size:12px;color:#404040;letter-spacing:0.269px;">1/12/2021 2:53 PM</span>
<span class="t" id="t91" style="left:894px;top:365.6px;font-size:12px;color:#404040;letter-spacing:0.269px;">1/12/2021 2:57 PM</span>
<span class="t" id="t92" style="left:1084.5px;top:365.6px;font-size:12px;color:#404040;letter-spacing:-0.859px;">Yes</span>
<span class="t" id="t93" style="left:1212px;top:365.6px;font-size:12px;color:#404040;letter-spacing:-0.859px;">Yes</span>
<div class="r" style="left:359px;top:365.6px;width:26px;height:13.4px;background:#fff;"></div>
<svg class="r" style="left:186px;top:390.6px;" width="1127" height="2" viewBox="0 0 1127 2" fill="none"><rect x="0" y="0.1" width="1127" height="1.8" fill="#f0f0f0"/></svg>
<svg class="r" style="left:217px;top:403.5px;" width="10" height="10" viewBox="0 0 10 10" fill="none"><circle cx="5" cy="5" r="4.3" stroke="#858585" stroke-width="1.5" fill="none"/><path d="M5 3.6 V5.4 M4.2 3.8 H5.8" stroke="#909090" stroke-width="0.8"/></svg>
<span class="t" id="t94" style="left:247.8px;top:396.7px;font-size:11.5px;color:#0f6cbd;letter-spacing:0.243px;-webkit-text-stroke:0.3px #0f6cbd;">Amanda Brady</span>
<span class="t" id="t95" style="left:362px;top:399.2px;font-size:12px;color:#404040;letter-spacing:-0.859px;">Yes</span>
<span class="t" id="t96" style="left:490px;top:399.2px;font-size:12px;color:#2368ab;letter-spacing:-0.240px;">Demo Guide 4</span>
<span class="t" id="t97" style="left:596.5px;top:399.2px;font-size:12px;color:#404040;letter-spacing:0.112px;">EndedOnCom...</span>
<span class="t" id="t98" style="left:703px;top:399.2px;font-size:12px;color:#404040;letter-spacing:0.269px;">1/12/2021 2:39 PM</span>
<span class="t" id="t99" style="left:894px;top:399.2px;font-size:12px;color:#404040;letter-spacing:0.269px;">1/12/2021 2:44 PM</span>
<span class="t" id="t100" style="left:1084.5px;top:399.2px;font-size:12px;color:#404040;letter-spacing:-0.859px;">Yes</span>
<span class="t" id="t101" style="left:1212px;top:399.2px;font-size:12px;color:#404040;letter-spacing:-0.859px;">Yes</span>
<svg class="r" style="left:186px;top:424.2px;" width="1127" height="2" viewBox="0 0 1127 2" fill="none"><rect x="0" y="0.1" width="1127" height="1.8" fill="#f0f0f0"/></svg>
<svg class="r" style="left:217px;top:437.1px;" width="10" height="10" viewBox="0 0 10 10" fill="none"><circle cx="5" cy="5" r="4.3" stroke="#858585" stroke-width="1.5" fill="none"/><path d="M5 3.6 V5.4 M4.2 3.8 H5.8" stroke="#909090" stroke-width="0.8"/></svg>
<span class="t" id="t102" style="left:247.8px;top:430.05px;font-size:11.5px;color:#0f6cbd;letter-spacing:0.243px;-webkit-text-stroke:0.3px #0f6cbd;">Amanda Brady</span>
<span class="t" id="t103" style="left:362px;top:432.8px;font-size:12px;color:#404040;letter-spacing:-0.859px;">Yes</span>
<span class="t" id="t104" style="left:490px;top:432.8px;font-size:12px;color:#2368ab;letter-spacing:-0.240px;">Demo Guide 4</span>
<span class="t" id="t105" style="left:596.5px;top:432.8px;font-size:12px;color:#404040;letter-spacing:0.159px;">Ended</span>
<span class="t" id="t106" style="left:703px;top:432.8px;font-size:12px;color:#404040;letter-spacing:0.269px;">1/12/2021 2:35 PM</span>
<span class="t" id="t107" style="left:894px;top:432.8px;font-size:12px;color:#404040;letter-spacing:0.269px;">1/12/2021 2:35 PM</span>
<span class="t" id="t108" style="left:1084.5px;top:432.8px;font-size:12px;color:#404040;letter-spacing:0.578px;">No</span>
<span class="t" id="t109" style="left:1212px;top:432.8px;font-size:12px;color:#404040;letter-spacing:-0.859px;">Yes</span>
<svg class="r" style="left:186px;top:457.8px;" width="1127" height="2" viewBox="0 0 1127 2" fill="none"><rect x="0" y="0.1" width="1127" height="1.8" fill="#f0f0f0"/></svg>
<svg class="r" style="left:217px;top:470.7px;" width="10" height="10" viewBox="0 0 10 10" fill="none"><circle cx="5" cy="5" r="4.3" stroke="#858585" stroke-width="1.5" fill="none"/><path d="M5 3.6 V5.4 M4.2 3.8 H5.8" stroke="#909090" stroke-width="0.8"/></svg>
<span class="t" id="t110" style="left:247.8px;top:464.15px;font-size:11.5px;color:#0f6cbd;letter-spacing:0.243px;-webkit-text-stroke:0.3px #0f6cbd;">Amanda Brady</span>
<span class="t" id="t111" style="left:362px;top:466.4px;font-size:12px;color:#404040;letter-spacing:-0.859px;">Yes</span>
<span class="t" id="t112" style="left:490px;top:466.4px;font-size:12px;color:#2368ab;letter-spacing:-0.240px;">Demo Guide 4</span>
<span class="t" id="t113" style="left:596.5px;top:466.4px;font-size:12px;color:#404040;letter-spacing:0.112px;">EndedOnCom...</span>
<span class="t" id="t114" style="left:703px;top:466.4px;font-size:12px;color:#404040;letter-spacing:0.269px;">1/12/2021 2:32 PM</span>
<span class="t" id="t115" style="left:894px;top:466.4px;font-size:12px;color:#404040;letter-spacing:0.269px;">1/12/2021 2:35 PM</span>
<span class="t" id="t116" style="left:1084.5px;top:466.4px;font-size:12px;color:#404040;letter-spacing:-0.859px;">Yes</span>
<span class="t" id="t117" style="left:1212px;top:466.4px;font-size:12px;color:#404040;letter-spacing:-0.859px;">Yes</span>
<svg class="r" style="left:186px;top:491.4px;" width="1127" height="2" viewBox="0 0 1127 2" fill="none"><rect x="0" y="0.1" width="1127" height="1.8" fill="#f0f0f0"/></svg>
<div class="r" style="left:229px;top:490.4px;width:89px;height:4px;background:#fff;"></div>
<svg class="r" style="left:217px;top:504.3px;" width="10" height="10" viewBox="0 0 10 10" fill="none"><circle cx="5" cy="5" r="4.3" stroke="#858585" stroke-width="1.5" fill="none"/><path d="M5 3.6 V5.4 M4.2 3.8 H5.8" stroke="#909090" stroke-width="0.8"/></svg>
<span class="t" id="t118" style="left:247.8px;top:500px;font-size:11.5px;color:#0f6cbd;letter-spacing:0.243px;-webkit-text-stroke:0.3px #0f6cbd;">Amanda Brady</span>
<span class="t" id="t119" style="left:362px;top:500px;font-size:12px;color:#404040;letter-spacing:-0.859px;">Yes</span>
<span class="t" id="t120" style="left:490px;top:500px;font-size:12px;color:#2368ab;letter-spacing:-0.240px;">Demo Guide 4</span>
<span class="t" id="t121" style="left:596.5px;top:500px;font-size:12px;color:#404040;letter-spacing:0.159px;">Ended</span>
<span class="t" id="t122" style="left:703px;top:500px;font-size:12px;color:#404040;letter-spacing:0.269px;">1/12/2021 2:29 PM</span>
<span class="t" id="t123" style="left:894px;top:500px;font-size:12px;color:#404040;letter-spacing:0.269px;">1/12/2021 2:29 PM</span>
<span class="t" id="t124" style="left:1084.5px;top:500px;font-size:12px;color:#404040;letter-spacing:0.578px;">No</span>
<span class="t" id="t125" style="left:1212px;top:500px;font-size:12px;color:#404040;letter-spacing:-0.859px;">Yes</span>
<svg class="r" style="left:186px;top:525px;" width="1127" height="2" viewBox="0 0 1127 2" fill="none"><rect x="0" y="0.1" width="1127" height="1.8" fill="#f0f0f0"/></svg>
<svg class="r" style="left:217px;top:537.9px;" width="10" height="10" viewBox="0 0 10 10" fill="none"><circle cx="5" cy="5" r="4.3" stroke="#858585" stroke-width="1.5" fill="none"/><path d="M5 3.6 V5.4 M4.2 3.8 H5.8" stroke="#909090" stroke-width="0.8"/></svg>
<span class="t" id="t126" style="left:247.8px;top:534.1px;font-size:11.5px;color:#0f6cbd;letter-spacing:0.243px;-webkit-text-stroke:0.3px #0f6cbd;">Amanda Brady</span>
<span class="t" id="t127" style="left:362px;top:533.6px;font-size:12px;color:#404040;letter-spacing:-0.859px;">Yes</span>
<span class="t" id="t128" style="left:490px;top:533.6px;font-size:12px;color:#2368ab;letter-spacing:-0.240px;">Demo Guide 4</span>
<span class="t" id="t129" style="left:596.5px;top:533.6px;font-size:12px;color:#404040;letter-spacing:0.112px;">EndedOnCom...</span>
<span class="t" id="t130" style="left:703px;top:533.6px;font-size:12px;color:#404040;letter-spacing:0.269px;">1/12/2021 2:29 PM</span>
<span class="t" id="t131" style="left:894px;top:533.6px;font-size:12px;color:#404040;letter-spacing:0.269px;">1/12/2021 2:29 PM</span>
<span class="t" id="t132" style="left:1084.5px;top:533.6px;font-size:12px;color:#404040;letter-spacing:-0.859px;">Yes</span>
<span class="t" id="t133" style="left:1212px;top:533.6px;font-size:12px;color:#404040;letter-spacing:-0.859px;">Yes</span>
<svg class="r" style="left:186px;top:558.6px;" width="1127" height="2" viewBox="0 0 1127 2" fill="none"><rect x="0" y="0.1" width="1127" height="1.8" fill="#f0f0f0"/></svg>
<svg class="r" style="left:217px;top:571.5px;" width="10" height="10" viewBox="0 0 10 10" fill="none"><circle cx="5" cy="5" r="4.3" stroke="#858585" stroke-width="1.5" fill="none"/><path d="M5 3.6 V5.4 M4.2 3.8 H5.8" stroke="#909090" stroke-width="0.8"/></svg>
<span class="t" id="t134" style="left:247.8px;top:567.2px;font-size:11.5px;color:#0f6cbd;letter-spacing:0.243px;-webkit-text-stroke:0.3px #0f6cbd;">Amanda Brady</span>
<span class="t" id="t135" style="left:362px;top:567.2px;font-size:12px;color:#404040;letter-spacing:-0.859px;">Yes</span>
<span class="t" id="t136" style="left:490px;top:567.2px;font-size:12px;color:#2368ab;letter-spacing:-0.240px;">Demo Guide 4</span>
<span class="t" id="t137" style="left:596.5px;top:567.2px;font-size:12px;color:#404040;letter-spacing:0.112px;">EndedOnCom...</span>
<span class="t" id="t138" style="left:703px;top:567.2px;font-size:12px;color:#404040;letter-spacing:0.245px;">1/12/2021 12:28 PM</span>
<span class="t" id="t139" style="left:894px;top:567.2px;font-size:12px;color:#404040;letter-spacing:0.245px;">1/12/2021 12:29 PM</span>
<span class="t" id="t140" style="left:1084.5px;top:567.2px;font-size:12px;color:#404040;letter-spacing:-0.859px;">Yes</span>
<span class="t" id="t141" style="left:1212px;top:567.2px;font-size:12px;color:#404040;letter-spacing:-0.859px;">Yes</span>
<svg class="r" style="left:186px;top:592.2px;" width="1127" height="2" viewBox="0 0 1127 2" fill="none"><rect x="0" y="0.1" width="1127" height="1.8" fill="#f0f0f0"/></svg>
<svg class="r" style="left:217px;top:605.1px;" width="10" height="10" viewBox="0 0 10 10" fill="none"><circle cx="5" cy="5" r="4.3" stroke="#858585" stroke-width="1.5" fill="none"/><path d="M5 3.6 V5.4 M4.2 3.8 H5.8" stroke="#909090" stroke-width="0.8"/></svg>
<span class="t" id="t142" style="left:247.8px;top:598.3px;font-size:11.5px;color:#0f6cbd;letter-spacing:0.243px;-webkit-text-stroke:0.3px #0f6cbd;">Amanda Brady</span>
<span class="t" id="t143" style="left:362px;top:600.8px;font-size:12px;color:#404040;letter-spacing:-0.859px;">Yes</span>
<span class="t" id="t144" style="left:490px;top:600.8px;font-size:12px;color:#2368ab;letter-spacing:-0.240px;">Demo Guide 4</span>
<span class="t" id="t145" style="left:596.5px;top:600.8px;font-size:12px;color:#404040;letter-spacing:0.159px;">Ended</span>
<span class="t" id="t146" style="left:703px;top:600.8px;font-size:12px;color:#404040;letter-spacing:0.245px;">1/12/2021 12:26 PM</span>
<span class="t" id="t147" style="left:894px;top:600.8px;font-size:12px;color:#404040;letter-spacing:0.245px;">1/12/2021 12:27 PM</span>
<span class="t" id="t148" style="left:1084.5px;top:600.8px;font-size:12px;color:#404040;letter-spacing:0.578px;">No</span>
<span class="t" id="t149" style="left:1212px;top:600.8px;font-size:12px;color:#404040;letter-spacing:-0.859px;">Yes</span>
<svg class="r" style="left:186px;top:625.8px;" width="1127" height="2" viewBox="0 0 1127 2" fill="none"><rect x="0" y="0.1" width="1127" height="1.8" fill="#f0f0f0"/></svg>
<svg class="r" style="left:217px;top:638.7px;" width="10" height="10" viewBox="0 0 10 10" fill="none"><circle cx="5" cy="5" r="4.3" stroke="#858585" stroke-width="1.5" fill="none"/><path d="M5 3.6 V5.4 M4.2 3.8 H5.8" stroke="#909090" stroke-width="0.8"/></svg>
<span class="t" id="t150" style="left:247.8px;top:633.4px;font-size:11.5px;color:#0f6cbd;letter-spacing:0.243px;-webkit-text-stroke:0.3px #0f6cbd;">Amanda Brady</span>
<span class="t" id="t151" style="left:362px;top:634.4px;font-size:12px;color:#404040;letter-spacing:-0.859px;">Yes</span>
<span class="t" id="t152" style="left:490px;top:634.4px;font-size:12px;color:#2368ab;letter-spacing:-0.240px;">Demo Guide 4</span>
<span class="t" id="t153" style="left:596.5px;top:634.4px;font-size:12px;color:#404040;letter-spacing:0.112px;">EndedOnCom...</span>
<span class="t" id="t154" style="left:703px;top:634.4px;font-size:12px;color:#404040;letter-spacing:0.245px;">1/12/2021 12:25 PM</span>
<span class="t" id="t155" style="left:894px;top:634.4px;font-size:12px;color:#404040;letter-spacing:0.245px;">1/12/2021 12:26 PM</span>
<span class="t" id="t156" style="left:1084.5px;top:634.4px;font-size:12px;color:#404040;letter-spacing:-0.859px;">Yes</span>
<span class="t" id="t157" style="left:1212px;top:634.4px;font-size:12px;color:#404040;letter-spacing:-0.859px;">Yes</span>
<svg class="r" style="left:186px;top:659.4px;" width="1127" height="2" viewBox="0 0 1127 2" fill="none"><rect x="0" y="0.1" width="1127" height="1.8" fill="#f0f0f0"/></svg>
<svg class="r" style="left:217px;top:672.3px;" width="10" height="10" viewBox="0 0 10 10" fill="none"><circle cx="5" cy="5" r="4.3" stroke="#858585" stroke-width="1.5" fill="none"/><path d="M5 3.6 V5.4 M4.2 3.8 H5.8" stroke="#909090" stroke-width="0.8"/></svg>
<span class="t" id="t158" style="left:247.8px;top:667.25px;font-size:11.5px;color:#0f6cbd;letter-spacing:0.243px;-webkit-text-stroke:0.3px #0f6cbd;">Amanda Brady</span>
<span class="t" id="t159" style="left:362px;top:668px;font-size:12px;color:#404040;letter-spacing:-0.859px;">Yes</span>
<span class="t" id="t160" style="left:490px;top:668px;font-size:12px;color:#2368ab;letter-spacing:-0.240px;">Demo Guide 4</span>
<span class="t" id="t161" style="left:596.5px;top:668px;font-size:12px;color:#404040;letter-spacing:0.112px;">EndedOnCom...</span>
<span class="t" id="t162" style="left:703px;top:668px;font-size:12px;color:#404040;letter-spacing:0.407px;">1/12/2021 10:58 AM</span>
<span class="t" id="t163" style="left:894px;top:668px;font-size:12px;color:#404040;letter-spacing:0.407px;">1/12/2021 10:59 AM</span>
<span class="t" id="t164" style="left:1084.5px;top:668px;font-size:12px;color:#404040;letter-spacing:-0.859px;">Yes</span>
<span class="t" id="t165" style="left:1212px;top:668px;font-size:12px;color:#404040;letter-spacing:-0.859px;">Yes</span>
<svg class="r" style="left:186px;top:693px;" width="1127" height="2" viewBox="0 0 1127 2" fill="none"><rect x="0" y="0.1" width="1127" height="1.8" fill="#f0f0f0"/></svg>
<svg class="r" style="left:217px;top:705.9px;" width="10" height="10" viewBox="0 0 10 10" fill="none"><circle cx="5" cy="5" r="4.3" stroke="#858585" stroke-width="1.5" fill="none"/><path d="M5 3.6 V5.4 M4.2 3.8 H5.8" stroke="#909090" stroke-width="0.8"/></svg>
<span class="t" id="t166" style="left:247.8px;top:700.35px;font-size:11.5px;color:#0f6cbd;letter-spacing:0.243px;-webkit-text-stroke:0.3px #0f6cbd;">Amanda Brady</span>
<span class="t" id="t167" style="left:362px;top:701.6px;font-size:12px;color:#404040;letter-spacing:-0.859px;">Yes</span>
<span class="t" id="t168" style="left:490px;top:701.6px;font-size:12px;color:#2368ab;letter-spacing:-0.240px;">Demo Guide 2</span>
<span class="t" id="t169" style="left:596.5px;top:701.6px;font-size:12px;color:#404040;letter-spacing:0.112px;">EndedOnCom...</span>
<span class="t" id="t170" style="left:703px;top:701.6px;font-size:12px;color:#404040;letter-spacing:0.344px;">1/11/2021 11:28 PM</span>
<span class="t" id="t171" style="left:894px;top:701.6px;font-size:12px;color:#404040;letter-spacing:0.344px;">1/11/2021 11:30 PM</span>
<span class="t" id="t172" style="left:1084.5px;top:701.6px;font-size:12px;color:#404040;letter-spacing:-0.859px;">Yes</span>
<span class="t" id="t173" style="left:1212px;top:701.6px;font-size:12px;color:#404040;letter-spacing:-0.859px;">Yes</span>
<svg class="r" style="left:186px;top:726.6px;" width="1127" height="2" viewBox="0 0 1127 2" fill="none"><rect x="0" y="0.1" width="1127" height="1.8" fill="#f0f0f0"/></svg>
<svg class="r" style="left:217px;top:739.5px;" width="10" height="10" viewBox="0 0 10 10" fill="none"><circle cx="5" cy="5" r="4.3" stroke="#858585" stroke-width="1.5" fill="none"/><path d="M5 3.6 V5.4 M4.2 3.8 H5.8" stroke="#909090" stroke-width="0.8"/></svg>
<span class="t" id="t174" style="left:247.8px;top:732.45px;font-size:11.5px;color:#0f6cbd;letter-spacing:0.243px;-webkit-text-stroke:0.3px #0f6cbd;">Amanda Brady</span>
<span class="t" id="t175" style="left:362px;top:735.2px;font-size:12px;color:#404040;letter-spacing:-0.859px;">Yes</span>
<span class="t" id="t176" style="left:490px;top:735.2px;font-size:12px;color:#2368ab;letter-spacing:-0.240px;">Demo Guide 4</span>
<span class="t" id="t177" style="left:596.5px;top:735.2px;font-size:12px;color:#404040;letter-spacing:0.112px;">EndedOnCom...</span>
<span class="t" id="t178" style="left:703px;top:735.2px;font-size:12px;color:#404040;letter-spacing:0.245px;">12/18/2020 2:33 PM</span>
<span class="t" id="t179" style="left:894px;top:735.2px;font-size:12px;color:#404040;letter-spacing:0.245px;">12/18/2020 2:35 PM</span>
<span class="t" id="t180" style="left:1084.5px;top:735.2px;font-size:12px;color:#404040;letter-spacing:-0.859px;">Yes</span>
<span class="t" id="t181" style="left:1212px;top:735.2px;font-size:12px;color:#404040;letter-spacing:-0.859px;">Yes</span>
</main>
<footer>
<div class="r" style="left:169px;top:754px;width:1180px;height:36.5px;background:#efefef;"></div>
<span class="t" id="t182" style="left:174px;top:762.8px;font-size:10px;color:#1b62c0;width:40px;text-align:center;">All</span>
<span class="t" id="t183" style="left:218px;top:762.8px;font-size:10px;color:#4c4c4c;width:40px;text-align:center;">#</span>
<span class="t" id="t184" style="left:260px;top:762.8px;font-size:10px;color:#4c4c4c;width:40px;text-align:center;">A</span>
<span class="t" id="t185" style="left:302px;top:762.8px;font-size:10px;color:#4c4c4c;width:40px;text-align:center;">B</span>
<span class="t" id="t186" style="left:344px;top:762.8px;font-size:10px;color:#4c4c4c;width:40px;text-align:center;">C</span>
<span class="t" id="t187" style="left:386px;top:762.8px;font-size:10px;color:#4c4c4c;width:40px;text-align:center;">D</span>
<span class="t" id="t188" style="left:428px;top:762.8px;font-size:10px;color:#4c4c4c;width:40px;text-align:center;">E</span>
<span class="t" id="t189" style="left:469px;top:762.8px;font-size:10px;color:#4c4c4c;width:40px;text-align:center;">F</span>
<span class="t" id="t190" style="left:510px;top:762.8px;font-size:10px;color:#4c4c4c;width:40px;text-align:center;">G</span>
<span class="t" id="t191" style="left:553px;top:762.8px;font-size:10px;color:#4c4c4c;width:40px;text-align:center;">H</span>
<span class="t" id="t192" style="left:594px;top:762.8px;font-size:10px;color:#4c4c4c;width:40px;text-align:center;">I</span>
<span class="t" id="t193" style="left:632px;top:762.8px;font-size:10px;color:#4c4c4c;width:40px;text-align:center;">J</span>
<span class="t" id="t194" style="left:673px;top:762.8px;font-size:10px;color:#4c4c4c;width:40px;text-align:center;">K</span>
<span class="t" id="t195" style="left:715px;top:762.8px;font-size:10px;color:#4c4c4c;width:40px;text-align:center;">L</span>
<span class="t" id="t196" style="left:757px;top:762.8px;font-size:10px;color:#4c4c4c;width:40px;text-align:center;">M</span>
<span class="t" id="t197" style="left:801px;top:762.8px;font-size:10px;color:#4c4c4c;width:40px;text-align:center;">N</span>
<span class="t" id="t198" style="left:844px;top:762.8px;font-size:10px;color:#4c4c4c;width:40px;text-align:center;">O</span>
<span class="t" id="t199" style="left:886.5px;top:762.8px;font-size:10px;color:#4c4c4c;width:40px;text-align:center;">P</span>
<span class="t" id="t200" style="left:929px;top:762.8px;font-size:10px;color:#4c4c4c;width:40px;text-align:center;">Q</span>
<span class="t" id="t201" style="left:971.5px;top:762.8px;font-size:10px;color:#4c4c4c;width:40px;text-align:center;">R</span>
<span class="t" id="t202" style="left:1013px;top:762.8px;font-size:10px;color:#4c4c4c;width:40px;text-align:center;">S</span>
<span class="t" id="t203" style="left:1054px;top:762.8px;font-size:10px;color:#4c4c4c;width:40px;text-align:center;">T</span>
<span class="t" id="t204" style="left:1095.5px;top:762.8px;font-size:10px;color:#4c4c4c;width:40px;text-align:center;">U</span>
<span class="t" id="t205" style="left:1138px;top:762.8px;font-size:10px;color:#4c4c4c;width:40px;text-align:center;">V</span>
<span class="t" id="t206" style="left:1181.5px;top:762.8px;font-size:10px;color:#4c4c4c;width:40px;text-align:center;">W</span>
<span class="t" id="t207" style="left:1225.5px;top:762.8px;font-size:10px;color:#4c4c4c;width:40px;text-align:center;">X</span>
<span class="t" id="t208" style="left:1266.5px;top:762.8px;font-size:10px;color:#4c4c4c;width:40px;text-align:center;">Y</span>
<span class="t" id="t209" style="left:1308.5px;top:762.8px;font-size:10px;color:#4c4c4c;width:40px;text-align:center;">Z</span>
<div class="r" style="left:188px;top:779px;width:11.5px;height:2px;background:#1b5fc4;"></div>
<span class="t" id="t210" style="left:181.5px;top:798px;font-size:10px;color:#3a3a3a;letter-spacing:-0.046px;">1 - 50 of 506 (0 selected)</span>
<span class="t" id="t211" style="left:1275px;top:797.6px;font-size:10px;color:#3a3a3a;letter-spacing:-0.501px;">Page 1</span>
<svg class="r" style="left:1230px;top:801.2px;" width="11" height="10" viewBox="0 0 11 10" fill="none"><path d="M0.6 0 V10" stroke="#8a8a8a" stroke-width="1" fill="none"/><path d="M10.8 5 H2.4" stroke="#b8b8b8" stroke-width="1.1" fill="none"/><path d="M6.8 0.3 L2 5 L6.8 9.7" stroke="#8a8a8a" stroke-width="1" fill="none"/></svg>
<svg class="r" style="left:1252px;top:801.2px;" width="11" height="10" viewBox="0 0 11 10" fill="none"><path d="M10.6 5 H1.2" stroke="#c4c4c4" stroke-width="1.1" fill="none"/><path d="M5.4 0.3 L0.6 5 L5.4 9.7" stroke="#9a9a9a" stroke-width="1" fill="none"/></svg>
<svg class="r" style="left:1327px;top:801.2px;" width="11" height="10" viewBox="0 0 11 10" fill="none"><path d="M0.4 5 H10" stroke="#b4c2dc" stroke-width="1.1" fill="none"/><path d="M5.8 0.3 L10.6 5 L5.8 9.7" stroke="#6f93d6" stroke-width="1" fill="none"/></svg>
</footer>
<div class="scrollbar">
<div class="r" style="left:1336px;top:124px;width:12px;height:630px;background:#f1f1f1;"></div>
<div class="r" style="left:1337px;top:138px;width:11px;height:221px;background:#c1c1c1;"></div>
<svg class="r" style="left:1339px;top:129px;" width="7" height="4" viewBox="0 0 7 4" fill="none"><path d="M0 4 L3.5 0 L7 4 Z" fill="#a3a3a3"/></svg>
<svg class="r" style="left:1340px;top:744.4px;" width="5.6" height="3.6" viewBox="0 0 5.6 3.6" fill="none"><path d="M0 0 L2.8 3.6 L5.6 0 Z" fill="#4a4a4a"/></svg>
</div>
</body></html>
